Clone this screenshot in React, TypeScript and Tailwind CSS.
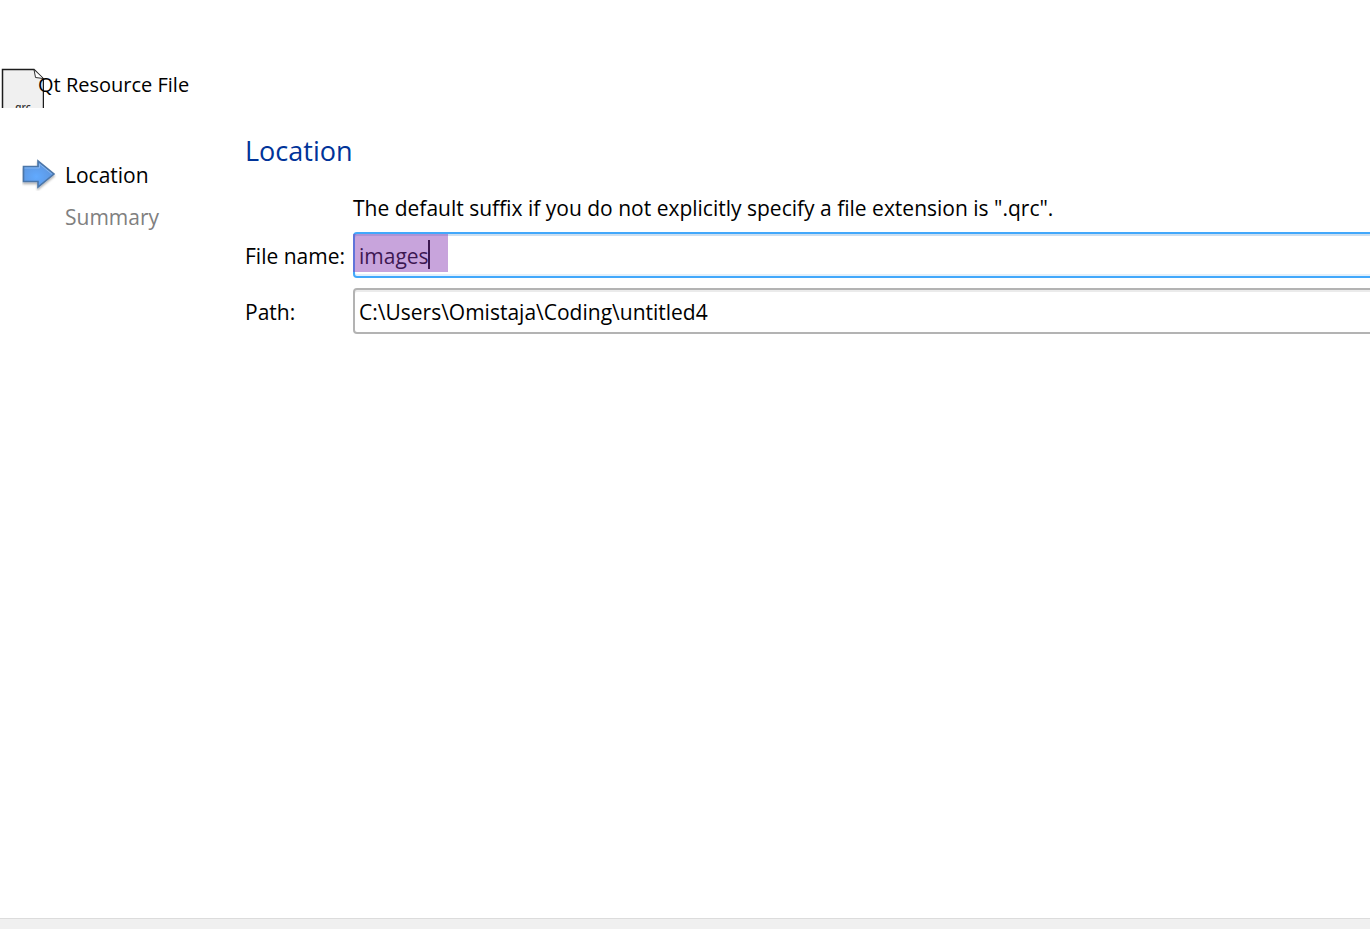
import { useState } from 'react';

const steps = ['Location', 'Summary'];

function ResourceFileIcon() {
  return (
    <svg className="block h-10 w-11 shrink-0 overflow-hidden" viewBox="0 0 44 40" aria-hidden="true">
      <path d="M2.5 42V1.5H34L43.5 11V42" fill="#f0f0f0" />
      <path d="M2.5 42V1.5H34L43.5 11V42" fill="none" stroke="#1c1c1c" strokeWidth="1.5" />
      <path d="M34 1.5L35.5 9.5L43.5 10.5Z" fill="#fff" stroke="#333" strokeWidth="1" />
      <text x="23" y="43" textAnchor="middle" fontSize="10" fontWeight="600" fill="#333">
        qrc
      </text>
    </svg>
  );
}

function StepArrow() {
  return (
    <svg className="h-8 w-9 shrink-0" viewBox="0 0 36 32" aria-hidden="true">
      <defs>
        <radialGradient id="arrowFill" cx="0.42" cy="0.6" r="0.6">
          <stop offset="0" stopColor="#62aaff" />
          <stop offset="1" stopColor="#5c94dc" />
        </radialGradient>
        <filter id="arrowShadow" x="-20%" y="-20%" width="150%" height="150%">
          <feDropShadow dx="0" dy="2" stdDeviation="1.2" floodColor="#000" floodOpacity="0.3" />
        </filter>
      </defs>
      <path
        d="M1.5 7.5H16V2L32 15L16 28V22.5H1.5Z"
        fill="url(#arrowFill)"
        stroke="#4c76a8"
        strokeWidth="1.6"
        filter="url(#arrowShadow)"
      />
      <path d="M2.5 9H17.5V5L29.8 15" fill="none" stroke="#86b6ef" strokeWidth="1" />
    </svg>
  );
}

export default function App() {
  const [fileName, setFileName] = useState('images');
  const [path, setPath] = useState('C:\\Users\\Omistaja\\Coding\\untitled4');

  return (
    <div className="flex min-h-screen flex-col overflow-hidden bg-white font-['Open_Sans','Noto_Sans',sans-serif] text-[21px] leading-8 text-black">
      <header className="flex items-start pt-17">
        <ResourceFileIcon />
        <h1 className="-ml-1.5 text-[20px] leading-[34px]">Qt Resource File</h1>
      </header>

      <div className="flex flex-1 pt-[23px]">
        <ol className="w-[245px] shrink-0 pt-7 pl-[22px]">
          {steps.map((step, i) => (
            <li
              key={step}
              aria-current={i === 0 ? 'step' : undefined}
              className={i === 0 ? 'mb-[10px] flex text-black' : 'flex text-[#808080]'}
            >
              {i === 0 ? <StepArrow /> : <span className="w-9" />}
              <span className="ml-[7px]">{step}</span>
            </li>
          ))}
        </ol>

        <main className="-mr-2 min-w-0 flex-1">
          <h2 className="text-[27px] leading-10 text-[#003399]">Location</h2>
          <div className="mt-[21px] grid grid-cols-[108px_1fr] items-center">
            <p className="col-start-2 mb-2">
              The default suffix if you do not explicitly specify a file extension is ".qrc".
            </p>

            <label htmlFor="file-name" className="pt-0.5 whitespace-nowrap">File name:</label>
            <div className="relative">
              <input
                id="file-name"
                type="text"
                value={fileName}
                onChange={(e) => setFileName(e.target.value)}
                className="block h-[46px] w-full rounded border-2 border-[#42a8fb] bg-white px-1 pt-0.5 shadow-[inset_0_2px_0_#cddff0,inset_0_-2px_0_#e3f1fd] outline-none"
              />
              <span className="pointer-events-none absolute top-2 left-[75px] h-[29px] w-0.5 bg-black" />
              {/* marker over the typed name */}
              <span className="pointer-events-none absolute top-0.5 left-0 h-[38px] w-[95px] bg-[#8535b2]/45" />
            </div>

            <label htmlFor="path" className="mt-[10px] pt-0.5">Path:</label>
            <input
              id="path"
              type="text"
              value={path}
              onChange={(e) => setPath(e.target.value)}
              className="mt-[10px] block h-[46px] w-full rounded border-2 border-[#b3b3b3] bg-white px-1 pt-0.5 shadow-[inset_0_2px_0_#ebebeb] outline-none"
            />
          </div>
        </main>
      </div>

      <footer className="h-[11px] border-t border-[#dcdcdc] bg-[#f0f0f0]" />
    </div>
  );
}
